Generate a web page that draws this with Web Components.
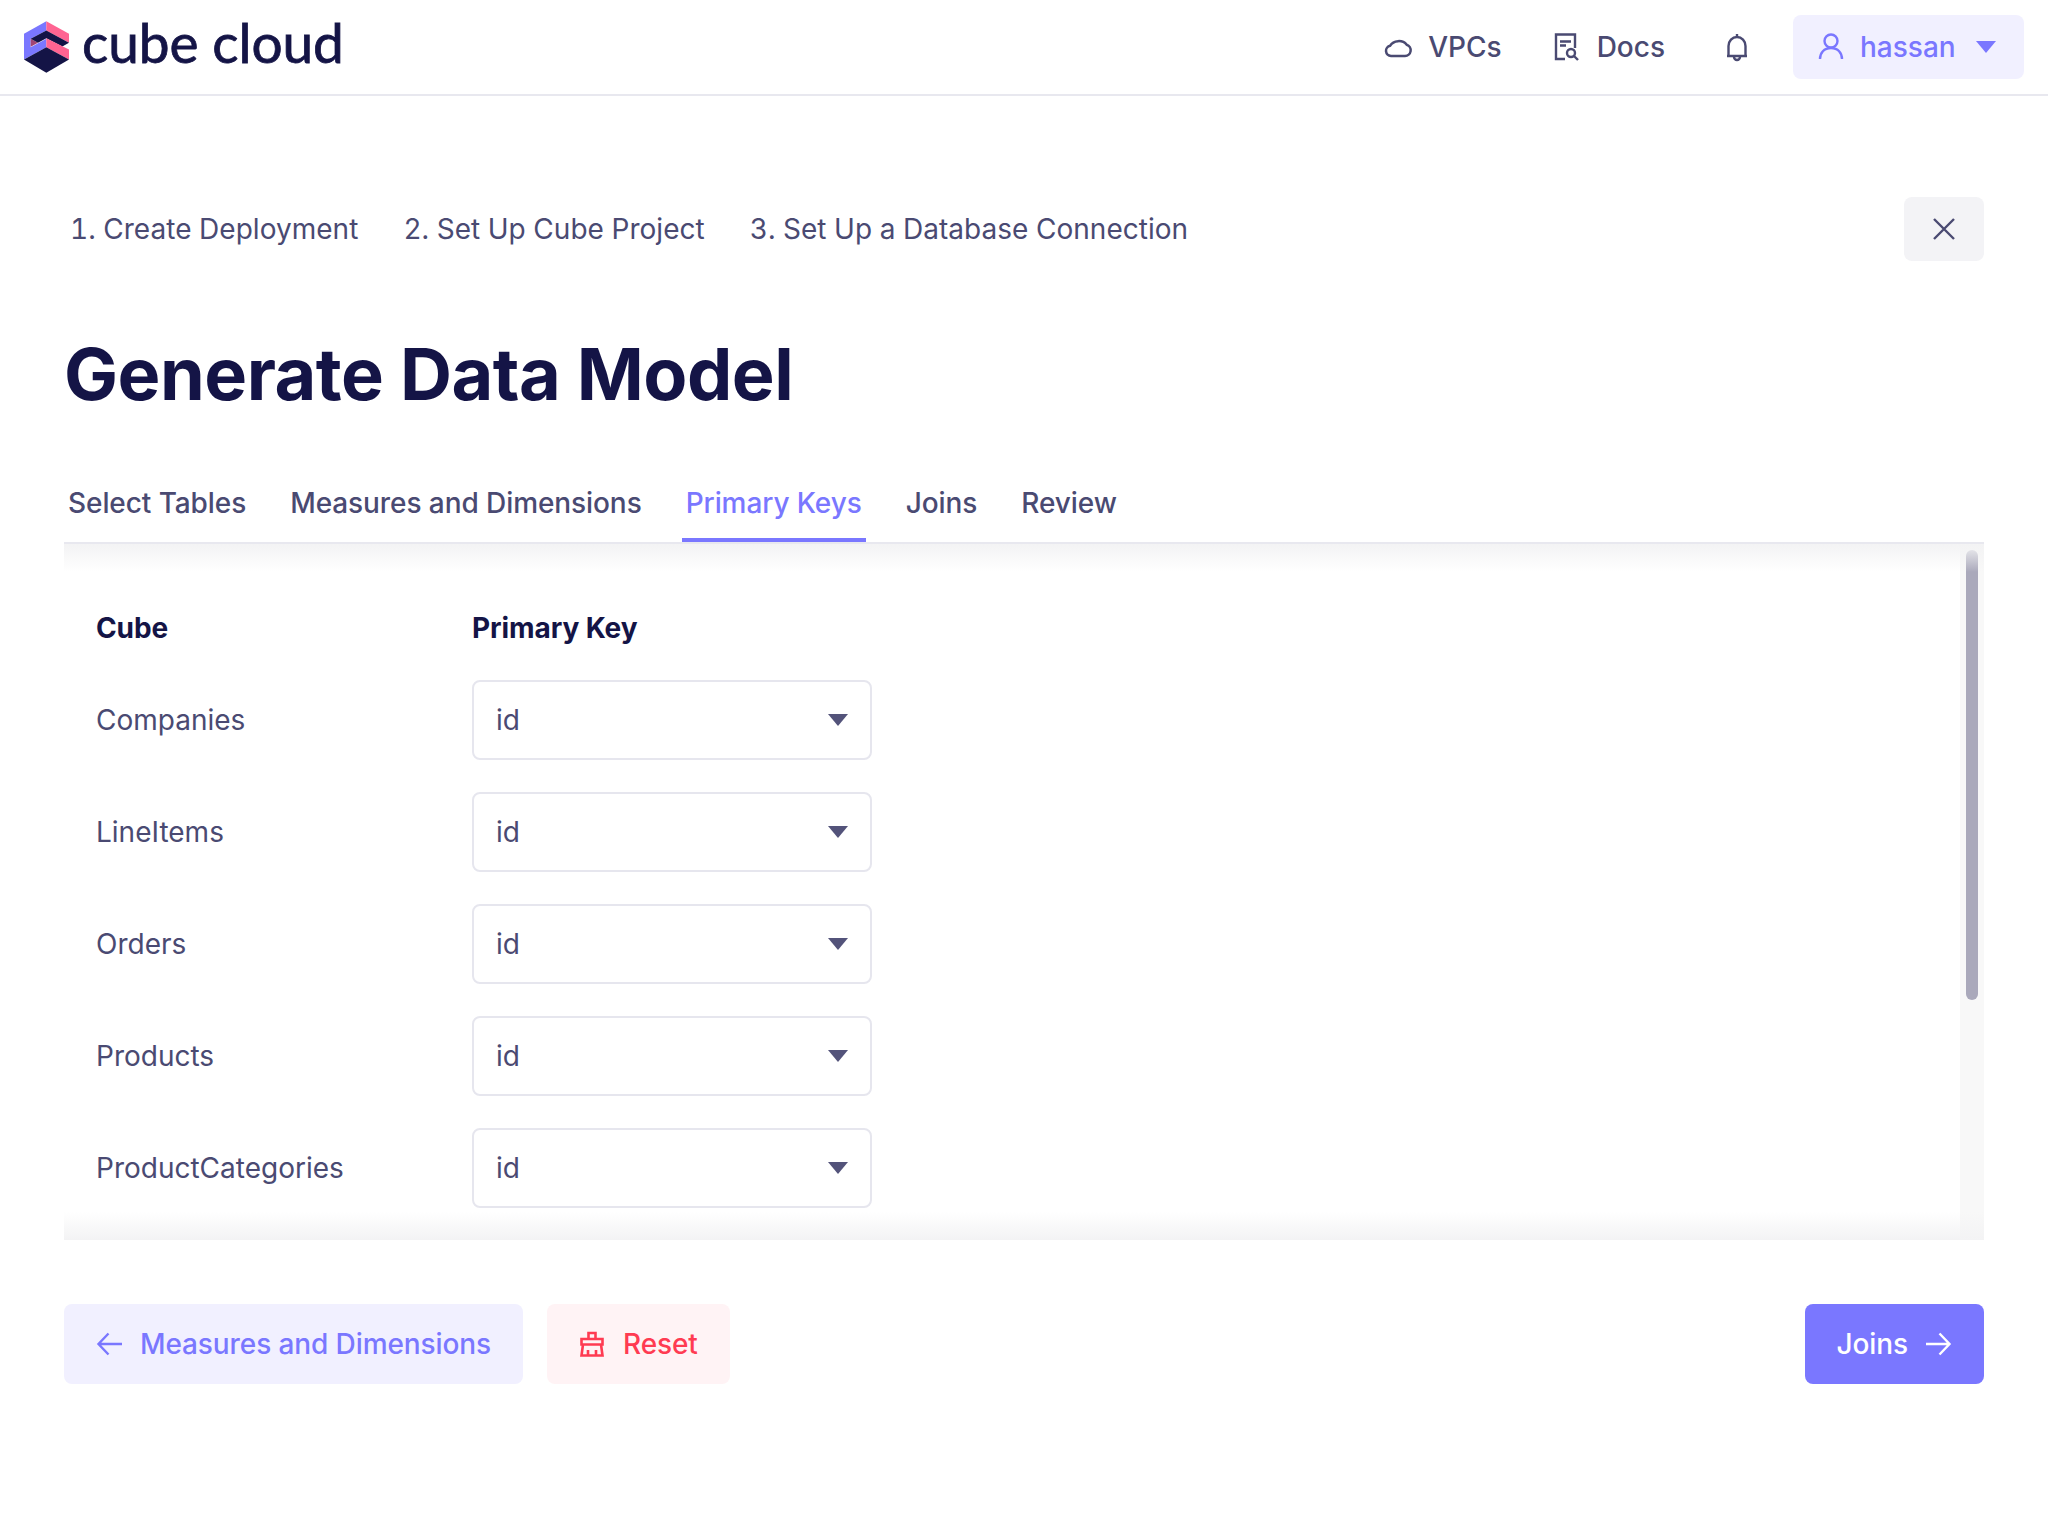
<!doctype html>
<html>
<head>
<meta charset="utf-8">
<title>Generate Data Model</title>
<style>
  html, body { margin: 0; padding: 0; background: #fff; }
  body { font-family: Inter, "Liberation Sans", sans-serif; color: #4a4a72; }
</style>
</head>
<body>
<template id="t-header">
  <style>
    :host { display: flex; align-items: center; height: 94px; border-bottom: 2px solid #e8e8ef; box-sizing: content-box; padding: 0 24px; }
    .logo { display: flex; align-items: center; gap: 13px; }
    .logo span { font: 400 55px Lato, sans-serif; -webkit-text-stroke: 0.8px #141446; color: #141446; line-height: 55px; margin-bottom: 9px; letter-spacing: -0.1px; }
    nav { margin-left: auto; display: flex; align-items: center; }
    a { display: flex; align-items: center; font-size: 28px; font-weight: 500; color: #4a4a72; }
    svg { display: block; }
    .vpc svg { margin-right: 15px; }
    .docs { margin-left: 49px; }
    .docs svg { margin-right: 18px; }
    .bell { margin-left: 58px; }
    .user { margin-left: 42px; width: 231px; height: 64px; box-sizing: border-box; padding: 0 28px 0 24px; background: #f1f0ff; border-radius: 8px; color: #7a77ff; }
    .user svg:first-child { margin-right: 15px; }
    .user svg:last-child { margin-left: auto; }
  </style>
  <div class="logo">
    <svg width="45" height="52" viewBox="30 27 135 155">
      <path d="M97 27L30 65V142L97 105V80L50 105V80L97 55Z" fill="#7a77ff"/>
      <path d="M50 80L72 92L50 104Z" fill="#a14474"/>
      <path d="M97 27L165 65V92L97 55Z" fill="#ff6492"/>
      <path d="M50 80L97 55L165 92L145 103L97 78L72 92Z" fill="#141446"/>
      <path d="M97 78L165 112V142L97 105Z" fill="#ff6492"/>
      <path d="M30 142L97 105L165 142L97 182Z" fill="#141446"/>
    </svg>
    <span>cube cloud</span>
  </div>
  <nav>
    <a class="vpc"><svg width="30" height="28" viewBox="0 0 30 28" fill="none" stroke="#4a4a72" stroke-width="2.500"><path d="M8 23H22A5.800 5.800 0 0 0 23.700 11.700A9.500 8 0 0 0 7.200 12.700A5.200 5.200 0 0 0 8 23Z"/></svg>VPCs</a>
    <a class="docs"><svg width="28" height="28" viewBox="0 0 28 28" fill="none" stroke="#4a4a72" stroke-width="2.400"><path d="M14 26H5V1.500H24V15"/><path d="M9 8.500H20M9 12.500H15"/><circle cx="20" cy="20" r="4"/><path d="M23 23L27 27"/></svg>Docs</a>
    <a class="bell"><svg width="28" height="30" viewBox="0 0 28 30" fill="none" stroke="#4a4a72" stroke-width="2.400"><path d="M14 2V5M4 24H24M5.500 24V14A8.500 9 0 0 1 22.500 14V24M11 25A3 3 0 0 0 17 25"/></svg></a>
    <a class="user"><svg width="28" height="30" viewBox="0 0 28 30" fill="none" stroke="#7a77ff" stroke-width="2.400"><circle cx="14" cy="9" r="6.500"/><path d="M3 27C3 21 7 16 14 16C21 16 25 21 25 27"/></svg>hassan<svg width="20" height="12" viewBox="0 0 20 12"><path d="M0 0H20L10 12Z" fill="#7a77ff"/></svg></a>
  </nav>
</template>

<template id="t-steps">
  <style>
    :host { display: flex; align-items: center; justify-content: space-between; height: 64px; }
    ol { display: flex; gap: 45px; list-style: none; margin: 0; padding: 0 0 0 6px; font-size: 28px; letter-spacing: 0.03px; color: #4a4a72; font-variant-numeric: tabular-nums; }
    button { all: unset; display: flex; align-items: center; justify-content: center; width: 80px; height: 64px; background: #f3f3f6; border-radius: 8px; }
  </style>
  <ol><li>1. Create Deployment</li><li>2. Set Up Cube Project</li><li>3. Set Up a Database Connection</li></ol>
  <button><svg width="22" height="22" viewBox="0 0 22 22" fill="none" stroke="#4a4a72" stroke-width="2.400"><path d="M1 1L21 21M21 1L1 21"/></svg></button>
</template>

<template id="t-tabs">
  <style>
    :host { display: flex; gap: 36px; border-bottom: 2px solid #e8e8ef; height: 60px; box-sizing: content-box; }
    div { padding: 4px 4px 0; font-size: 28px; font-weight: 500; letter-spacing: -0.08px; line-height: 34px; color: #4a4a72; box-sizing: border-box; height: 60px; }
    .on { color: #7a77ff; border-bottom: 4px solid #7a77ff; }
  </style>
  <div>Select Tables</div><div>Measures and Dimensions</div><div class="on">Primary Keys</div><div>Joins</div><div>Review</div>
</template>

<template id="t-scroll">
  <style>
    :host { display: block; position: relative; height: 696px; overflow: hidden; }
    .content { padding: 67px 0 0 32px; }
    .shade { position: absolute; left: 0; right: 0; height: 28px; pointer-events: none; }
    .top { top: 0; background: linear-gradient(#f3f3f4, #fff0); }
    .bot { bottom: 0; background: linear-gradient(#fff0, #f3f3f4); }
    .track { position: absolute; top: 0; right: 0; bottom: 0; width: 24px; background: #f8f8f8; }
    .thumb { position: absolute; top: 6px; left: 6px; width: 12px; height: 450px; border-radius: 6px; background: #aaa9bb; }
  </style>
  <div class="content"><slot></slot></div>
  <div class="track"><div class="thumb"></div></div>
  <div class="shade top"></div><div class="shade bot"></div>
</template>

<template id="t-row">
  <style>
    :host { display: grid; grid-template-columns: 376px 400px; align-items: center; height: 80px; margin-bottom: 32px; font-size: 28px; color: #4a4a72; }
    .select { display: flex; align-items: center; justify-content: space-between; box-sizing: border-box; height: 80px; padding: 0 22px; border: 2px solid #e6e6ee; border-radius: 8px; background: #fff; }
    svg { display: block; }
  </style>
  <div><slot></slot></div>
  <div class="select"><span id="v"></span><svg width="20" height="12" viewBox="0 0 20 12"><path d="M0 0H20L10 12Z" fill="#53537a"/></svg></div>
</template>

<template id="t-head">
  <style>
    :host { display: grid; grid-template-columns: 376px 400px; align-items: center; height: 34px; margin-bottom: 35px; font-size: 28px; font-weight: 700; letter-spacing: -0.1px; color: #141446; }
  </style>
  <div>Cube</div><div>Primary Key</div>
</template>

<template id="t-btn">
  <style>
    :host { display: inline-flex; align-items: center; height: 80px; padding: 0 32px; border-radius: 8px; font-size: 28px; font-weight: 500; letter-spacing: -0.1px; box-sizing: border-box; gap: 18px; white-space: nowrap; }
    :host([kind=back]) { background: #f1f0ff; color: #7a77ff; }
    :host([kind=reset]) { background: #fff3f5; color: #ff3b52; }
    :host([kind=next]) { background: #7a77ff; color: #fff; }
    ::slotted(svg) { display: block; }
  </style>
  <slot></slot>
</template>

<template id="t-footer">
  <style>
    :host { display: flex; gap: 24px; margin-top: 64px; }
  </style>
  <slot></slot>
</template>

<cube-header></cube-header>
<div style="padding: 101px 64px 0;">
  <cube-steps></cube-steps>
  <h1 style="margin: 69px 0 64px; font-size: 72px; line-height: 88px; font-weight: 700; color: #141446; letter-spacing: -0.5px;">Generate Data Model</h1>
  <cube-tabs></cube-tabs>
  <cube-scroll>
    <cube-head></cube-head>
    <cube-row value="id">Companies</cube-row>
    <cube-row value="id">LineItems</cube-row>
    <cube-row value="id">Orders</cube-row>
    <cube-row value="id">Products</cube-row>
    <cube-row value="id">ProductCategories</cube-row>
  </cube-scroll>
  <cube-footer>
    <cube-btn kind="back"><svg width="26" height="24" viewBox="0 0 26 24" fill="none" stroke="#7a77ff" stroke-width="2.400"><path d="M26 12H3M12.500 1.500L2.500 12L12.500 22.500"/></svg>Measures and Dimensions</cube-btn>
    <cube-btn kind="reset"><svg width="26" height="26" viewBox="0 0 26 26" fill="none" stroke="#ff3b52" stroke-width="2.600"><path d="M9.500 8V2H16.500V8M2.500 8H23.500V13.500H2.500ZM4 13.500L2.500 24.500H23.500L22 13.500M9 24V19M17 24V19"/></svg>Reset</cube-btn>
    <cube-btn kind="next" style="margin-left:auto">Joins<svg width="26" height="24" viewBox="0 0 26 24" fill="none" stroke="#fff" stroke-width="2.400"><path d="M0 12H23M13.500 1.500L23.500 12L13.500 22.500"/></svg></cube-btn>
  </cube-footer>
</div>

<script>
  // every element is just its template in an open shadow root
  function simple(tag, id) {
    customElements.define(tag, class extends HTMLElement {
      constructor() {
        super();
        const root = this.attachShadow({ mode: 'open' });
        root.appendChild(document.getElementById(id).content.cloneNode(true));
      }
    });
  }
  simple('cube-header', 't-header');
  simple('cube-steps', 't-steps');
  simple('cube-tabs', 't-tabs');
  simple('cube-scroll', 't-scroll');
  simple('cube-head', 't-head');
  simple('cube-btn', 't-btn');
  simple('cube-footer', 't-footer');

  class CubeRow extends HTMLElement {
    constructor() {
      super();
      const root = this.attachShadow({ mode: 'open' });
      root.appendChild(document.getElementById('t-row').content.cloneNode(true));
      root.getElementById('v').textContent = this.getAttribute('value');
    }
  }
  customElements.define('cube-row', CubeRow);
</script>
</body>
</html>
